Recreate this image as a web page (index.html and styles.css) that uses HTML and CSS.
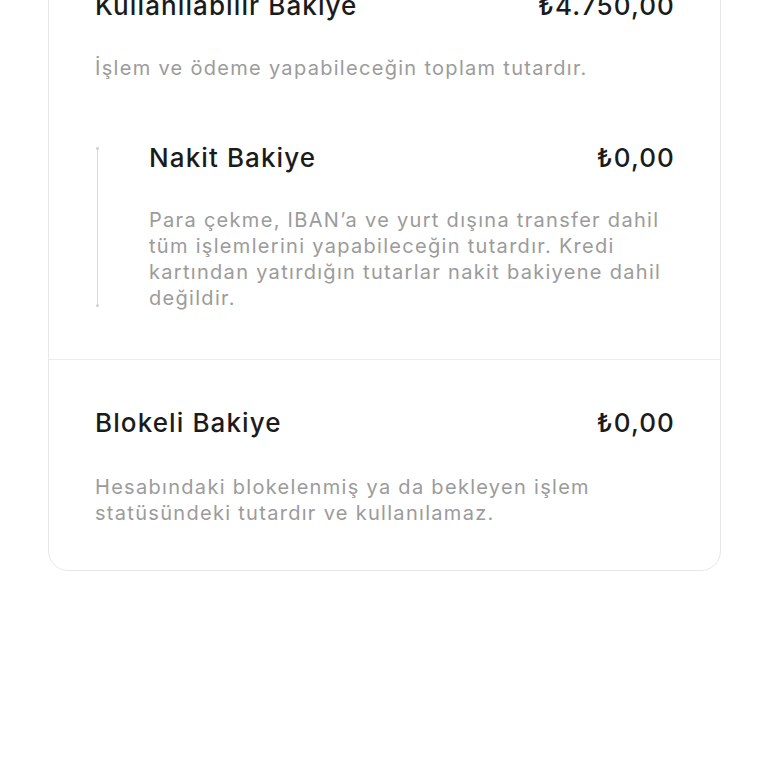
FILE: index.html
```html
<!DOCTYPE html>
<html lang="tr">
    <head>
        <meta charset="utf-8">
        <title>Bakiye Detayı</title>
        <link rel="stylesheet" href="styles.css">
    </head>
    <body>
        <div class="card">
            <div class="section top">
                <div class="row">
                    <span class="label">Kullanılabilir Bakiye</span>
                    <span class="amount">₺4.750,00</span>
                </div>
                <p class="note first">İşlem ve ödeme yapabileceğin toplam tutardır.</p>

                <div class="sub">
                    <div class="rail"><span class="dot"></span><span class="line"></span><span class="dot"></span></div>
                    <div class="sub_body">
                        <div class="row">
                            <span class="label">Nakit Bakiye</span>
                            <span class="amount">₺0,00</span>
                        </div>
                        <p class="note">Para çekme, IBAN’a ve yurt dışına transfer dahil<br>tüm işlemlerini yapabileceğin tutardır. Kredi<br>kartından yatırdığın tutarlar nakit bakiyene dahil<br>değildir.</p>
                    </div>
                </div>
            </div>
            <div class="section bottom">
                <div class="row">
                    <span class="label">Blokeli Bakiye</span>
                    <span class="amount">₺0,00</span>
                </div>
                <p class="note">Hesabındaki blokelenmiş ya da bekleyen işlem<br>statüsündeki tutardır ve kullanılamaz.</p>
            </div>
        </div>
    </body>
</html>
```
FILE: styles.css
```css
body {
	margin: 0;
	background: #ffffff;
	font-family: Inter, "Noto Sans", sans-serif;
	overflow: hidden;
}
.card {
	margin: -51px 47px 0 48px;
	border: 1px solid #e8e8e8;
	border-radius: 20px;
	background: #ffffff;
}
.section {
	padding: 0 46px;
}
.section.top {
	padding-top: 42px;
	padding-bottom: 48px;
	border-bottom: 1px solid #ececec;
}
.section.bottom {
	padding-top: 49px;
	padding-bottom: 44px;
}
.row {
	display: flex;
	justify-content: space-between;
	align-items: flex-start;
	height: 32px;
	line-height: 28px;
}
.label, .amount {
	font-size: 26px;
	font-weight: 500;
	letter-spacing: 1.1px;
	color: #1b1b1b;
}
.amount {
	margin-right: -1px;
}
.note {
	margin: 31px 0 0 0;
	font-size: 20px;
	line-height: 26px;
	letter-spacing: 1.3px;
	color: #9b9b9b;
}
.sub {
	display: flex;
	margin-top: 63px;
}
.rail {
	display: flex;
	flex-direction: column;
	align-items: center;
	width: 5px;
	margin: 3px 0 4px 0;
}
.line {
	flex: 1;
	width: 1px;
	background: #dcdcdc;
}
.dot {
	width: 3px;
	height: 3px;
	border-radius: 50%;
	background: #cfcfcf;
}
.sub_body {
	flex: 1;
	margin-left: 49px;
}
.section.bottom .note {
	margin-top: 33px;
}
```
